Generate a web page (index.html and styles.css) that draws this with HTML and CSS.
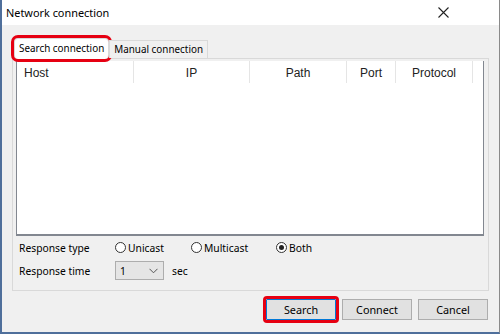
FILE: index.html
```html
<!DOCTYPE html>
<html lang="en">
<head>
    <meta charset="UTF-8">
    <title>Network connection</title>
    <link rel="stylesheet" href="styles.css">
</head>
<body>

<div class="window">
    <div class="titlebar">
        <span class="title">Network connection</span>
        <svg class="close" width="11" height="11" viewBox="0 0 11 11">
            <path d="M0.5 0.5 L10.5 10.5 M10.5 0.5 L0.5 10.5" stroke="#222" stroke-width="1.1" fill="none"/>
        </svg>
    </div>

    <div class="content">
        <div class="tabs">
            <div class="tab active">Search connection</div>
            <div class="tab">Manual connection</div>
        </div>

        <div class="tabpanel">
            <div class="listview">
                <div class="lv-header">
                    <div class="col col-host">Host</div>
                    <div class="col col-ip">IP</div>
                    <div class="col col-path">Path</div>
                    <div class="col col-port">Port</div>
                    <div class="col col-proto">Protocol</div>
                    <div class="col col-rest"></div>
                </div>
                <div class="lv-body"></div>
            </div>

            <div class="option-row">
                <span class="label">Response type</span>
                <label class="radio"><span class="circle"></span>Unicast</label>
                <label class="radio"><span class="circle"></span>Multicast</label>
                <label class="radio"><span class="circle checked"></span>Both</label>
            </div>
            <div class="option-row">
                <span class="label">Response time</span>
                <div class="combo">
                    <span>1</span>
                    <svg width="9" height="6" viewBox="0 0 9 6">
                        <path d="M0.5 0.8 L4.5 4.8 L8.5 0.8" stroke="#555" stroke-width="1" fill="none"/>
                    </svg>
                </div>
                <span class="unit">sec</span>
            </div>
        </div>

        <div class="buttons">
            <button class="btn default">Search</button>
            <button class="btn">Connect</button>
            <button class="btn">Cancel</button>
        </div>
    </div>
</div>

</body>
</html>
```

FILE: styles.css
```css
body {
    margin: 0;
    font-family: "Noto Sans", "Liberation Sans", sans-serif;
    font-size: 10.3px;
    color: #000;
    background: #ffffff;
}
.window {
    width: 500px;
    height: 334px;
    box-sizing: border-box;
    background: #f0f0f0;
    border-left: 2px solid #4f6f9b;
    border-right: 1px solid #8a8a8a;
    border-bottom: 2px solid #4f6f9b;
    display: flex;
    flex-direction: column;
}
.titlebar {
    height: 25px;
    background: #ffffff;
    display: flex;
    align-items: center;
    justify-content: space-between;
    padding: 0 50px 0 4px;
}
.title {
    font-size: 10.9px;
}
.content {
    flex: 1;
    padding: 12px 10px 0 10px;
    display: flex;
    flex-direction: column;
}
.tabs {
    display: flex;
    align-items: flex-end;
    height: 21px;
    padding-left: 2px;
    position: relative;
    z-index: 1;
    font-size: 9.9px;
}
.tab {
    border: 1px solid #d9d9d9;
    border-bottom: none;
    background: #f0f0f0;
    padding: 0 4px;
    height: 17px;
    line-height: 16px;
}
.tab.active {
    background: #ffffff;
    height: 20px;
    line-height: 19px;
    margin-bottom: -1px;
    padding: 0 4px;
    outline: 3px solid #e60012;
    outline-offset: 0px;
    border-radius: 4px;
}
.tabpanel {
    border: 1px solid #d9d9d9;
    background: #f0f0f0;
    height: 233px;
    box-sizing: border-box;
    padding: 2px 4px 0 3px;
}
.listview {
    background: #ffffff;
    border: 1px solid #828790;
    border-width: 0 1px 2px 1px;
    height: 173px;
    display: flex;
    flex-direction: column;
}
.lv-header {
    display: flex;
    height: 25px;
    color: #222;
    font-family: "Liberation Sans", Arial, sans-serif;
    font-size: 12px;
}
.col {
    border-right: 1px solid #e5e5e5;
    line-height: 25px;
    height: 22px;
    text-align: center;
}
.col-host { width: 117px; text-align: left; padding-left: 7px; box-sizing: border-box; }
.col-ip { width: 115px; }
.col-path { width: 96px; }
.col-port { width: 48px; }
.col-proto { width: 76px; }
.col-rest { flex: 1; border-right: none; }
.lv-body {
    flex: 1;
}
.option-row {
    display: flex;
    align-items: center;
    height: 23px;
    padding-left: 3px;
}
.option-row:first-of-type {
    margin-top: 6px;
}
.label {
    width: 96px;
}
.radio {
    display: flex;
    align-items: center;
}
.radio:nth-of-type(1) { width: 76px; }
.radio:nth-of-type(2) { width: 85px; }
.circle {
    width: 11px;
    height: 11px;
    border: 1px solid #333;
    border-radius: 50%;
    background: #fff;
    margin-right: 2px;
    box-sizing: border-box;
    position: relative;
}
.circle.checked::after {
    content: "";
    position: absolute;
    left: 2px;
    top: 2px;
    width: 5px;
    height: 5px;
    border-radius: 50%;
    background: #222;
}
.combo {
    width: 49px;
    height: 19px;
    box-sizing: border-box;
    border: 1px solid #adadad;
    background: #e5e5e5;
    display: flex;
    align-items: center;
    justify-content: space-between;
    padding: 0 5px 0 4px;
}
.unit {
    margin-left: 8px;
}
.buttons {
    display: flex;
    justify-content: flex-end;
    gap: 6px;
    margin-top: 8px;
    padding-right: 1px;
}
.btn {
    width: 70px;
    height: 21px;
    border: 1px solid #adadad;
    background: #e1e1e1;
    font-family: "Noto Sans", "Liberation Sans", sans-serif;
    font-size: 10.8px;
    padding: 0;
    color: #000;
}
.btn.default {
    border-color: #0078d7;
    outline: 3px solid #e60012;
    outline-offset: 0px;
    border-radius: 1px;
}
```
